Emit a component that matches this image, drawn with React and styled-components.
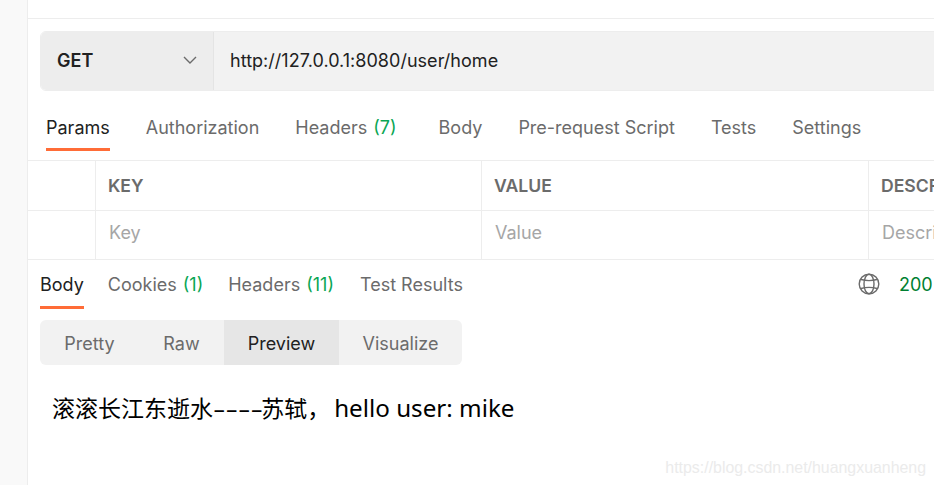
import React from 'react';
import styled, {createGlobalStyle} from 'styled-components';

const GlobalStyle = createGlobalStyle`
  html, body {
    margin: 0;
    padding: 0;
    background: #fff;
    overflow: hidden;
  }
  * {
    box-sizing: border-box;
  }
`;

const Page = styled.div`
  position: relative;
  display: flex;
  width: 934px;
  height: 485px;
  overflow: hidden;
  font-family: Inter, "Liberation Sans", sans-serif;
  font-size: 18px;
  color: #6b6b6b;
`;

const Sidebar = styled.div`
  flex: 0 0 28px;
  background: #f9f9f9;
  border-right: 1px solid #ededed;
`;

const Main = styled.div`
  flex: 1;
  min-width: 0;
  display: flex;
  flex-direction: column;
`;

const TopBar = styled.div`
  height: 19px;
  border-bottom: 1px solid #ededed;
`;

const RequestBar = styled.div`
  display: flex;
  height: 60px;
  width: 1000px;
  margin: 12px 0 0 12px;
  border-radius: 6px;
  overflow: hidden;
  border: 1px solid #ededed;
`;

const Method = styled.div`
  flex: 0 0 173px;
  display: flex;
  align-items: center;
  justify-content: space-between;
  padding: 0 16px 2px 16px;
  background: #ededed;
  border-right: 1px solid #e4e4e4;
  color: #212121;
  font-weight: 600;
`;

const UrlField = styled.div`
  flex: 1;
  display: flex;
  align-items: center;
  padding: 0 0 2px 16px;
  background: #f2f2f2;
  color: #212121;
  letter-spacing: 0.03px;
`;

const RequestTabs = styled.div`
  display: flex;
  height: 70px;
  padding: 0 0 0 18px;
  gap: 36px;
  border-bottom: 1px solid #ededed;
`;

const Tab = styled.div`
  height: ${props => props.$height}px;
  padding-top: ${props => props.$top}px;
  margin-right: ${props => props.$extra || 0}px;
  line-height: 24px;
  white-space: nowrap;
  color: ${props => (props.$active ? '#212121' : '#6b6b6b')};
  border-bottom: 3px solid ${props => (props.$active ? '#ff6c37' : 'transparent')};
`;

const Count = styled.span`
  margin-left: 6px;
  color: #0aa654;
`;

const ParamsTable = styled.div`
  display: grid;
  grid-template-columns: 68px 386px 387px 200px;
  width: 1041px;
  border-bottom: 1px solid #ededed;
`;

const HeadCell = styled.div`
  height: 50px;
  display: flex;
  align-items: center;
  padding: 0 0 1px 12px;
  white-space: nowrap;
  overflow: hidden;
  border-right: 1px solid #ededed;
  border-bottom: 1px solid #ededed;
  font-weight: 600;
  font-size: 17.6px;
  color: #6b6b6b;
`;

const InputCell = styled.div`
  height: 48px;
  display: flex;
  align-items: center;
  padding: 0 0 5px 13px;
  white-space: nowrap;
  overflow: hidden;
  border-right: 1px solid #ededed;
  color: #a6a6a6;
`;

const ResponseHead = styled.div`
  display: flex;
  justify-content: space-between;
  padding-left: 12px;
  height: 60px;
`;

const ResponseTabs = styled.div`
  display: flex;
  gap: 24px;
`;

const Status = styled.div`
  display: flex;
  align-items: flex-start;
  gap: 19px;
  padding-top: 13px;
  line-height: 24px;
  color: #007f31;
  flex: 0 0 76px;
  white-space: nowrap;
`;

const Segments = styled.div`
  display: flex;
  align-self: flex-start;
  height: 45px;
  margin-left: 12px;
  border-radius: 6px;
  overflow: hidden;
  background: #f2f2f2;
`;

const Segment = styled.div`
  display: flex;
  align-items: center;
  justify-content: center;
  padding-top: 1px;
  width: ${props => props.$width}px;
  color: ${props => (props.$active ? '#212121' : '#6b6b6b')};
  background: ${props => (props.$active ? '#e6e6e6' : 'transparent')};
`;

const PreviewText = styled.div`
  margin: 27px 0 0 24px;
  font-family: "Noto Sans", "Noto Sans CJK SC", sans-serif;
  font-size: 24.2px;
  line-height: 32px;
  color: #000;
  white-space: nowrap;
`;

const Cjk = styled.span`
  font-size: 23px;
  margin-right: ${props => props.$gap || 0}px;
`;

// the hyphens are much wider in the reference than in any installed font
const Dashes = styled.span`
  display: inline-block;
  margin-right: 17px;
  transform: scaleX(1.6);
  transform-origin: left center;
`;

const Watermark = styled.div`
  position: absolute;
  right: 8px;
  bottom: 8px;
  font-family: "Liberation Sans", sans-serif;
  font-size: 15.9px;
  color: #ebebeb;
`;

const Chevron = () => (
  <svg width="14" height="14" viewBox="0 0 14 14" fill="none" stroke="#6b6b6b" strokeWidth="1.4">
    <path d="M1 4l6 6 6-6" />
  </svg>
);

const Globe = () => (
  <svg width="22" height="22" viewBox="0 0 22 22" fill="none" stroke="#6b6b6b" strokeWidth="1.4">
    <circle cx="11" cy="11" r="9.8" />
    <ellipse cx="11" cy="11" rx="5" ry="9.8" />
    <path d="M3 6.5c5 1.4 11 1.4 16 0M3 15.5c5-1.4 11-1.4 16 0" />
  </svg>
);

const App = () => (
  <Page>
    <GlobalStyle />
    <Sidebar />
    <Main>
      <TopBar />
      <RequestBar>
        <Method>
          GET
          <Chevron />
        </Method>
        <UrlField>http://127.0.0.1:8080/user/home</UrlField>
      </RequestBar>
      <RequestTabs>
        <Tab $active $height={60} $top={25}>Params</Tab>
        <Tab $height={60} $top={25}>Authorization</Tab>
        <Tab $height={60} $top={25} $extra={6}>Headers<Count>(7)</Count></Tab>
        <Tab $height={60} $top={25}>Body</Tab>
        <Tab $height={60} $top={25}>Pre-request Script</Tab>
        <Tab $height={60} $top={25}>Tests</Tab>
        <Tab $height={60} $top={25}>Settings</Tab>
      </RequestTabs>
      <ParamsTable>
        <HeadCell />
        <HeadCell>KEY</HeadCell>
        <HeadCell>VALUE</HeadCell>
        <HeadCell>DESCRIPTION</HeadCell>
        <InputCell />
        <InputCell>Key</InputCell>
        <InputCell>Value</InputCell>
        <InputCell>Description</InputCell>
      </ParamsTable>
      <ResponseHead>
        <ResponseTabs>
          <Tab $active $height={49} $top={13}>Body</Tab>
          <Tab $height={49} $top={13} $extra={1}>Cookies<Count>(1)</Count></Tab>
          <Tab $height={49} $top={13} $extra={2}>Headers<Count>(11)</Count></Tab>
          <Tab $height={49} $top={13}>Test Results</Tab>
        </ResponseTabs>
        <Status>
          <Globe />
          200
        </Status>
      </ResponseHead>
      <Segments>
        <Segment $width={99}>Pretty</Segment>
        <Segment $width={85}>Raw</Segment>
        <Segment $active $width={115}>Preview</Segment>
        <Segment $width={123}>Visualize</Segment>
      </Segments>
      <PreviewText>
        <Cjk>滚滚长江东逝水</Cjk>
        <Dashes>----</Dashes>
        <Cjk $gap={4}>苏轼{'\uFF0C'}</Cjk>hello user: mike
      </PreviewText>
    </Main>
    <Watermark>https://blog.csdn.net/huangxuanheng</Watermark>
  </Page>
);

export default App;
